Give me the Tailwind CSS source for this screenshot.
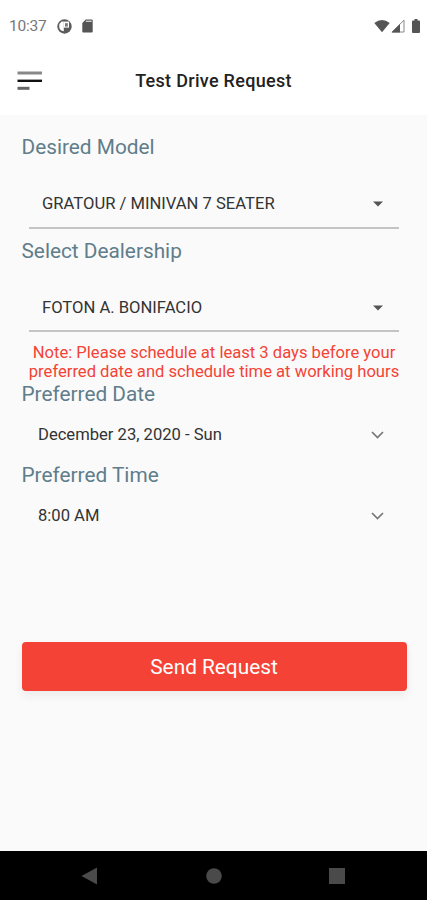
<!DOCTYPE html>
<html lang="en">
<head>
    <meta charset="UTF-8">
    <meta name="viewport" content="width=device-width, initial-scale=1.0">
    <title>Test Drive Request</title>
    <script src="https://cdn.jsdelivr.net/npm/@tailwindcss/browser@4"></script>
</head>
<body class="flex h-screen flex-col overflow-hidden bg-[#fafafa] font-['Roboto',sans-serif] text-[#333]">
    <header class="h-[115px] shrink-0 bg-white">
        <!-- Status bar -->
        <div class="flex h-[52px] items-center pl-[9px] pr-[7px]">
            <span class="w-[48px] pt-[2px] text-[15.5px] leading-none tracking-[-0.2px] text-[#777]">10:37</span>
            <svg class="h-[15px] w-[15px]" viewBox="0 0 15 15">
                <circle cx="7.5" cy="7.5" r="7.2" fill="#5c5c5c"/>
                <path d="M6.8 2.6V12.2Q2.2 11.4 2.2 7.4Q2.2 4.2 4.6 2.6Z" fill="#fff"/>
                <path d="M6.8 2.6H12V8.6H6.8Z" fill="#fff"/>
                <path d="M8 4.2H10.8V7.6H8Z" fill="#777"/>
            </svg>
            <svg class="ml-[10px] h-[14px] w-[11px]" viewBox="0 0 11 14">
                <path d="M3.7 .5H9.7Q10.7 .5 10.7 1.5V12.5Q10.7 13.5 9.7 13.5H1.2Q.3 13.5 .3 12.5V4Z" fill="#555"/>
                <path d="M3.8 2.3H9.7" stroke="#ccc" stroke-width="1.4"/>
            </svg>
            <svg class="ml-auto h-[14px] w-[16px]" viewBox="0 0 16 14">
                <path d="M.3 4Q8-2.2 15.7 4L8 13.3Z" fill="#555"/>
            </svg>
            <svg class="ml-[1px] h-[14px] w-[14px]" viewBox="0 0 14 14">
                <path d="M13 1.2V13H1Z" fill="#fff" stroke="#888" stroke-width="1"/>
                <path d="M9 4.9V13.4H.5Z" fill="#555"/>
            </svg>
            <svg class="ml-[7px] h-[14px] w-[8px]" viewBox="0 0 8 14">
                <path d="M2.5 0H5.5V1.4H7Q8 1.4 8 2.4V13Q8 14 7 14H1Q0 14 0 13V2.4Q0 1.4 1 1.4H2.5Z" fill="#555"/>
            </svg>
        </div>
        <!-- App bar -->
        <div class="grid h-[58px] grid-cols-[60px_1fr_60px] items-center">
            <svg class="ml-[17px] h-[20px] w-[26px]" viewBox="0 0 26 20">
                <path d="M.5 2H25" stroke="#888" stroke-width="3"/>
                <path d="M.5 9.8H25" stroke="#111" stroke-width="2.4"/>
                <path d="M.5 17.3H12.5" stroke="#666" stroke-width="3"/>
            </svg>
            <h1 class="pb-[2px] text-center text-[18px] font-medium tracking-[0.3px] text-[#222]">Test Drive Request</h1>
        </div>
    </header>

    <main class="flex-1 pl-[21.5px] pr-[20.5px] pt-[18px]">
        <h2 class="h-[28px] text-[20.8px] leading-[28px] text-[#607d8b]">Desired Model</h2>
        <div class="mx-[7.5px] flex h-[68px] items-center justify-between border-b-2 border-[#c4c4c4] pl-[13px] pr-[16px] pt-[20px]">
            <span class="text-[16.6px]">GRATOUR / MINIVAN 7 SEATER</span>
            <svg class="h-[6px] w-[10px]" viewBox="0 0 10 6"><path d="M0 .5H10L5 5.5Z" fill="#555"/></svg>
        </div>
        <h2 class="mt-[8px] h-[28px] text-[20.8px] leading-[28px] text-[#607d8b]">Select Dealership</h2>
        <div class="mx-[7.5px] flex h-[67px] items-center justify-between border-b-2 border-[#c4c4c4] pl-[13px] pr-[16px] pt-[21px]">
            <span class="text-[16.6px]">FOTON A. BONIFACIO</span>
            <svg class="h-[6px] w-[10px]" viewBox="0 0 10 6"><path d="M0 .5H10L5 5.5Z" fill="#555"/></svg>
        </div>
        <p class="mt-[11px] text-center text-[16.6px] leading-[19px] whitespace-nowrap text-[#f44336]">Note: Please schedule at least 3 days before your<br>preferred date and schedule time at working hours</p>

        <h2 class="-mt-px h-[28px] text-[20.8px] leading-[28px] text-[#607d8b]">Preferred Date</h2>
        <div class="flex h-[53px] items-center justify-between pl-[16.5px] pr-[22.5px]">
            <span class="pt-[2px] text-[16.6px]">December 23, 2020 - Sun</span>
            <svg class="h-[8px] w-[13px]" viewBox="0 0 13 8"><path d="M1 1L6.5 6.5L12 1" fill="none" stroke="#777" stroke-width="1.7"/></svg>
        </div>
        <h2 class="h-[28px] text-[20.8px] leading-[28px] text-[#607d8b]">Preferred Time</h2>
        <div class="flex h-[53px] items-center justify-between pl-[16.5px] pr-[22.5px]">
            <span class="pt-[2px] text-[16.6px]">8:00 AM</span>
            <svg class="h-[8px] w-[13px]" viewBox="0 0 13 8"><path d="M1 1L6.5 6.5L12 1" fill="none" stroke="#777" stroke-width="1.7"/></svg>
        </div>

        <button class="mt-[100px] h-[49px] w-full rounded-[4px] bg-[#f44336] pt-[2px] text-[20.8px] text-white shadow-[0_5px_10px_rgba(0,0,0,0.06)]">Send Request</button>
    </main>

    <!-- Android navigation bar -->
    <nav class="flex h-[49px] shrink-0 items-center justify-between bg-black pl-[81px] pr-[82px]">
        <svg class="h-[18px] w-[16px]" viewBox="0 0 16 18"><path d="M.5 9L16 .5V17.5Z" fill="#4a4a4a"/></svg>
        <svg class="ml-[2px] h-[16px] w-[16px]" viewBox="0 0 16 16"><circle cx="8" cy="8" r="7.8" fill="#4a4a4a"/></svg>
        <svg class="h-[16px] w-[16px]" viewBox="0 0 16 16"><path d="M0 0H16V16H0Z" fill="#4a4a4a"/></svg>
    </nav>
</body>
</html>
